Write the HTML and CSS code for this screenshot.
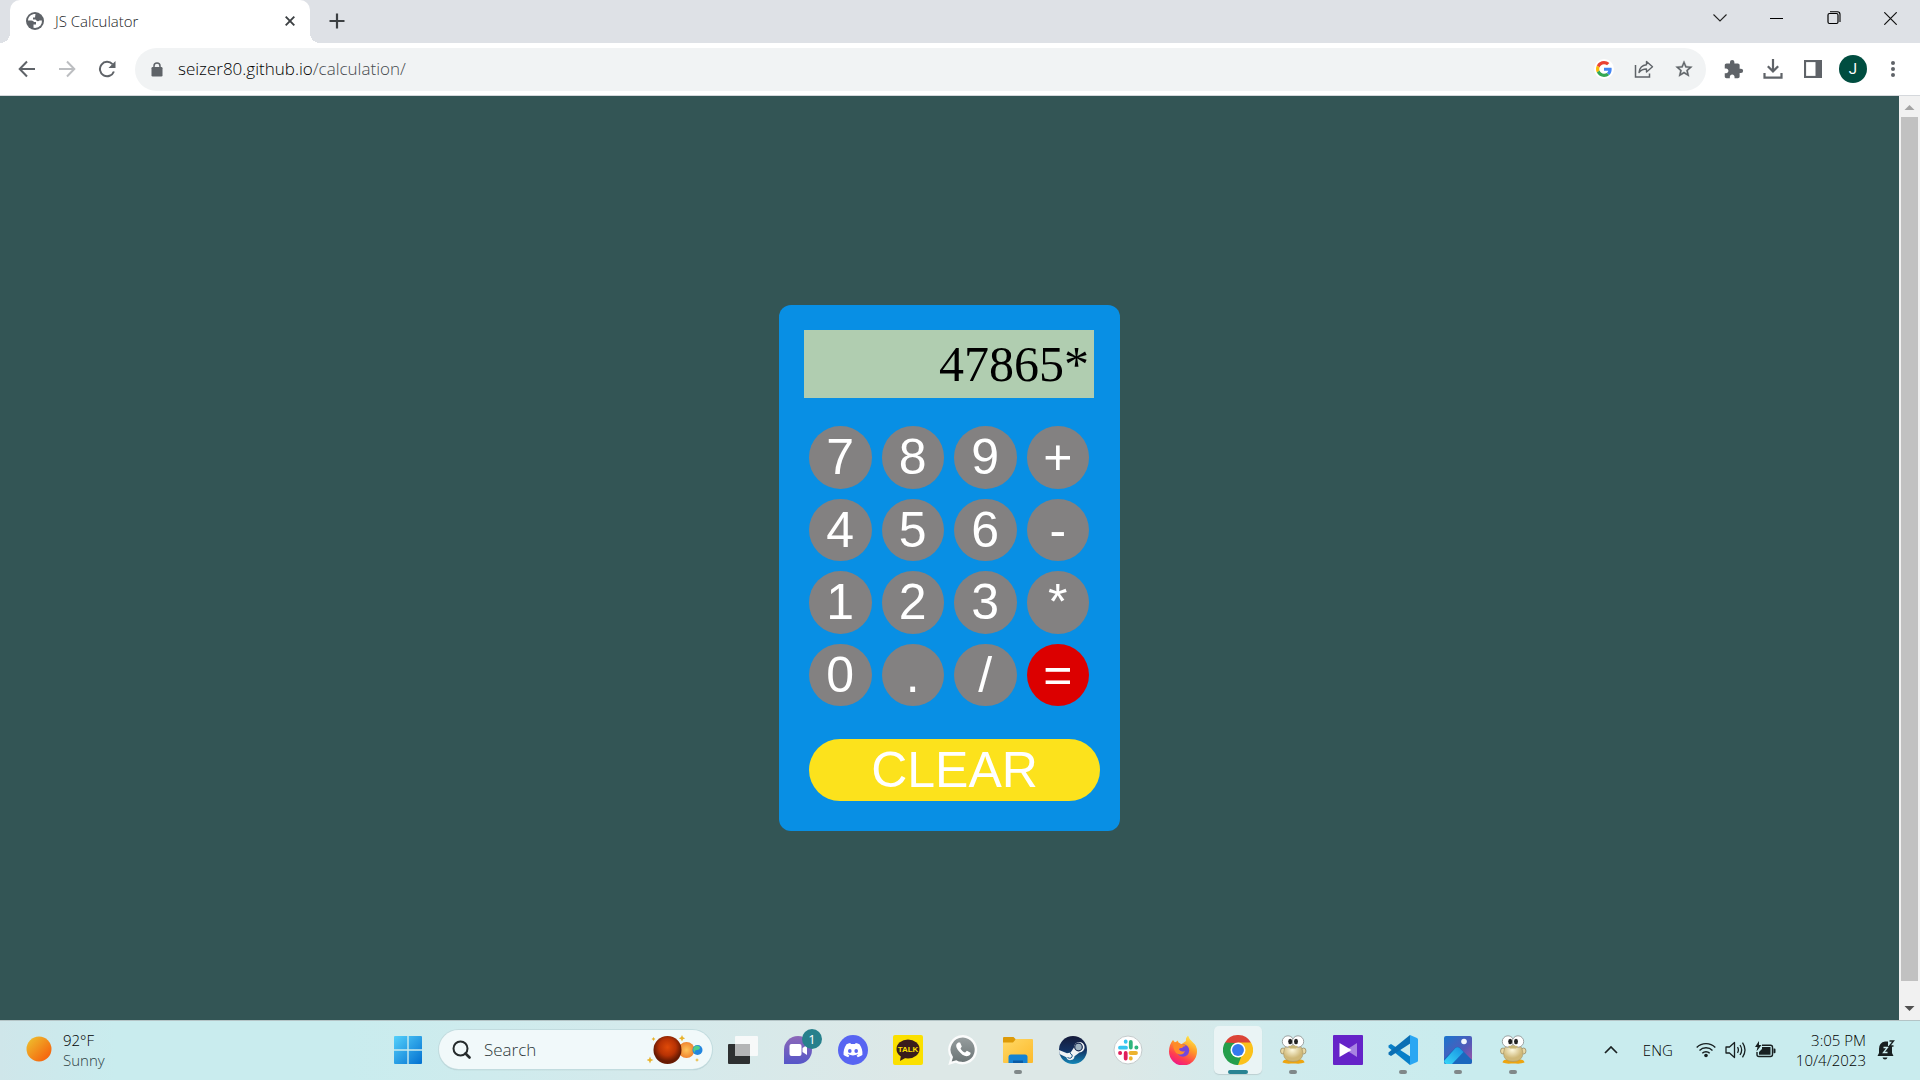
FILE: index.html
```html
<!DOCTYPE html>
<html lang="en">
<head>
<meta charset="utf-8">
<title>JS Calculator</title>
<link rel="stylesheet" href="styles.css">
</head>
<body>
<header class="tabstrip">
  <div class="tab">
    <svg class="favicon" viewBox="0 0 18 18"><circle cx="9" cy="9" r="9" fill="#5f6368"/><path d="M9.500 2C5 2 2.300 4.500 2 8.500h3.500q2 0 2.500 1.500h2v2.500H7.500v3.300Q12 16.500 14.500 13.500 16.300 11 15.900 8.500h-2.400q-1 1-2.500.5L9.500 7.500H7V5.500h2z" fill="#fff"/></svg>
    <span class="tab-title">JS Calculator</span>
    <button class="icon-btn tab-close" aria-label="Close tab"><svg width="10" height="10" viewBox="0 0 10 10"><path d="M.7.7l8.600 8.600M9.300.7L.7 9.300" stroke="#3c4043" stroke-width="1.900"/></svg></button>
  </div>
  <button class="icon-btn new-tab" aria-label="New tab"><svg width="16" height="16" viewBox="0 0 16 16"><path d="M8 .5v15M.5 8h15" stroke="#3c4043" stroke-width="2.200"/></svg></button>
  <div class="window-controls">
    <button class="win-btn" aria-label="Search tabs"><svg width="14" height="8" viewBox="0 0 14 8"><path d="M.5.5L7 7 13.500.5" fill="none" stroke="#222" stroke-width="1.100"/></svg></button>
    <button class="win-btn" aria-label="Minimize"><svg width="13" height="13" viewBox="0 0 13 13"><path d="M0 6.500h13" stroke="#000"/></svg></button>
    <button class="win-btn" aria-label="Restore"><svg width="14" height="14" viewBox="0 0 14 14"><rect x="1" y="2.500" width="10" height="10" rx="1.500" fill="none" stroke="#000" stroke-width="1.200"/><path d="M3 .7h7.300q2.700 0 2.700 2.700v7.600" fill="none" stroke="#000" stroke-width="1.100"/></svg></button>
    <button class="win-btn" aria-label="Close"><svg width="13" height="13" viewBox="0 0 13 13"><path d="M.3.3l12.400 12.400M12.700.3L.3 12.700" stroke="#111" stroke-width="1.200"/></svg></button>
  </div>
</header>

<nav class="toolbar" aria-label="Browser toolbar">
  <div class="nav-buttons">
    <button class="icon-btn nav-btn" aria-label="Back"><svg width="18" height="18" viewBox="0 0 18 18"><path d="M17 9H2M9 1.500L1.700 9 9 16.500" fill="none" stroke="#5f6368" stroke-width="2"/></svg></button>
    <button class="icon-btn nav-btn" aria-label="Forward" disabled><svg width="18" height="18" viewBox="0 0 18 18"><path d="M1 9h15M9 1.500L16.300 9 9 16.500" fill="none" stroke="#bcbec1" stroke-width="2"/></svg></button>
    <button class="icon-btn nav-btn" aria-label="Reload"><svg width="18" height="18" viewBox="0 0 18 18"><path d="M14.500 4.200A7.200 7.200 0 1 0 15.900 11.500" fill="none" stroke="#5f6368" stroke-width="2"/><path d="M17.500 1v7h-7z" fill="#5f6368"/></svg></button>
  </div>
  <div class="omnibox">
    <svg class="lock" width="12" height="15" viewBox="0 0 12 15"><path d="M3 6V4a3 3 0 0 1 6 0v2" fill="none" stroke="#5f6368" stroke-width="1.500"/><rect x=".5" y="5" width="11" height="9.500" rx="1.200" fill="#5f6368"/></svg>
    <div class="url" role="textbox" aria-label="Address">seizer80.github.io<span class="url-path">/calculation/</span></div>
    <button class="icon-btn omni-btn" aria-label="Search with Google"><span class="google"><svg width="16" height="16" viewBox="0 0 48 48"><path fill="#EA4335" d="M24 9.500c3.540 0 6.710 1.220 9.210 3.600l6.850-6.850C35.900 2.380 30.470 0 24 0 14.620 0 6.510 5.380 2.560 13.220l7.980 6.190C12.430 13.720 17.740 9.500 24 9.500z"/><path fill="#4285F4" d="M46.980 24.550c0-1.570-.15-3.090-.38-4.550H24v9.020h12.940c-.58 2.960-2.260 5.480-4.780 7.180l7.730 6c4.510-4.180 7.090-10.360 7.090-17.650z"/><path fill="#FBBC05" d="M10.530 28.590c-.48-1.450-.76-2.990-.76-4.590s.27-3.140.76-4.590l-7.980-6.190C.92 16.460 0 20.120 0 24s.92 7.540 2.560 10.780l7.970-6.190z"/><path fill="#34A853" d="M24 48c6.480 0 11.930-2.130 15.890-5.810l-7.730-6c-2.150 1.450-4.920 2.300-8.160 2.300-6.260 0-11.570-4.220-13.470-9.910l-7.980 6.190C6.510 42.620 14.620 48 24 48z"/></svg></span></button>
    <button class="icon-btn omni-btn" aria-label="Share"><svg width="20" height="18" viewBox="0 0 20 18"><path d="M1.500 5v12h14v-3.500" fill="none" stroke="#5f6368" stroke-width="1.500"/><path d="M12.500 1.500l6 5.300-6 5.200V9c-3.300 0-5.500 1-7.500 3.500.5-4 2.800-7.200 7.500-7.700z" fill="none" stroke="#5f6368" stroke-width="1.400" stroke-linejoin="round"/></svg></button>
    <button class="icon-btn omni-btn" aria-label="Bookmark"><svg width="20" height="20" viewBox="0 0 24 24"><path d="M22 9.240l-7.190-.62L12 2 9.190 8.630 2 9.240l5.460 4.730L5.820 21 12 17.270 18.180 21l-1.630-7.030L22 9.240zM12 15.400l-3.760 2.270 1-4.280-3.320-2.880 4.380-.38L12 6.100l1.710 4.040 4.380.38-3.320 2.880 1 4.280L12 15.400z" fill="#5f6368" stroke="#5f6368" stroke-width=".4"/></svg></button>
  </div>
  <div class="toolbar-actions">
    <button class="icon-btn nav-btn" aria-label="Extensions"><svg width="21" height="21" viewBox="0 0 24 24"><path d="M20.500 11H19V7c0-1.100-.9-2-2-2h-4V3.500a2.500 2.500 0 0 0-5 0V5H4c-1.100 0-1.990.9-1.990 2v3.800H3.500c1.490 0 2.700 1.210 2.700 2.700s-1.210 2.700-2.700 2.700H2V20c0 1.100.9 2 2 2h3.800v-1.500c0-1.490 1.210-2.700 2.700-2.700 1.490 0 2.700 1.210 2.700 2.700V22H17c1.100 0 2-.9 2-2v-4h1.500a2.500 2.500 0 0 0 0-5z" fill="#5f6368"/></svg></button>
    <button class="icon-btn nav-btn" aria-label="Downloads"><svg width="20" height="20" viewBox="0 0 20 20"><path d="M10 0v12M4.800 7.200L10 12.400l5.200-5.200" fill="none" stroke="#5f6368" stroke-width="2.200"/><path d="M1.500 14v4.700h17V14" fill="none" stroke="#5f6368" stroke-width="2.200"/></svg></button>
    <button class="icon-btn nav-btn" aria-label="Side panel"><svg width="18" height="18" viewBox="0 0 18 18"><rect x="1" y="1" width="16" height="16" fill="none" stroke="#5f6368" stroke-width="2.200"/><rect x="11.500" y="1" width="6" height="16" fill="#5f6368"/></svg></button>
    <button class="avatar" aria-label="Profile">J</button>
    <button class="icon-btn nav-btn" aria-label="Menu"><svg width="4" height="18" viewBox="0 0 4 18"><g fill="#5f6368"><circle cx="2" cy="3" r="2"/><circle cx="2" cy="9" r="2"/><circle cx="2" cy="15" r="2"/></g></svg></button>
  </div>
</nav>

<div class="viewport">
  <main class="page">
    <form class="calculator">
      <input class="display" type="text" aria-label="Result" value="47865*" readonly>
      <div class="keys">
        <button class="key" type="button">7</button>
        <button class="key" type="button">8</button>
        <button class="key" type="button">9</button>
        <button class="key" type="button">+</button>
        <button class="key" type="button">4</button>
        <button class="key" type="button">5</button>
        <button class="key" type="button">6</button>
        <button class="key" type="button">-</button>
        <button class="key" type="button">1</button>
        <button class="key" type="button">2</button>
        <button class="key" type="button">3</button>
        <button class="key" type="button">*</button>
        <button class="key" type="button">0</button>
        <button class="key" type="button">.</button>
        <button class="key" type="button">/</button>
        <button class="key key-equals" type="button">=</button>
      </div>
      <button class="clear" type="button">CLEAR</button>
    </form>
  </main>
  <div class="scrollbar" aria-hidden="true">
    <svg class="scroll-arrow" viewBox="0 0 21 21"><path d="M5.500 14L10.500 9l5 5z" fill="#a3a3a3"/></svg>
    <div class="scroll-track"><div class="scroll-thumb"></div></div>
    <svg class="scroll-arrow" viewBox="0 0 21 21"><path d="M5.500 7L10.500 12l5-5z" fill="#505050"/></svg>
  </div>
</div>

<svg class="defs" width="0" height="0" aria-hidden="true">
  <defs>
    <linearGradient id="sun" x1="0" y1="0" x2="1" y2="1"><stop offset=".1" stop-color="#eebb2c"/><stop offset=".8" stop-color="#f56a10"/></linearGradient>
    <linearGradient id="win" x1="0" y1="0" x2="1" y2="1"><stop offset="0" stop-color="#54d0fb"/><stop offset="1" stop-color="#0270d0"/></linearGradient>
    <linearGradient id="chatg" x1="0" y1="0" x2="0" y2="1"><stop offset="0" stop-color="#8c68b8"/><stop offset="1" stop-color="#5656c8"/></linearGradient>
    <linearGradient id="folderg" x1="0" y1="0" x2="1" y2="1"><stop offset="0" stop-color="#ffd866"/><stop offset="1" stop-color="#fdba2b"/></linearGradient>
    <linearGradient id="steamg" x1="0" y1="0" x2="0" y2="1"><stop offset="0" stop-color="#151a3a"/><stop offset=".5" stop-color="#133060"/><stop offset="1" stop-color="#1387b8"/></linearGradient>
    <linearGradient id="foxg" x1=".8" y1="0" x2=".3" y2="1"><stop offset="0" stop-color="#fff04a"/><stop offset=".4" stop-color="#ff9a28"/><stop offset=".75" stop-color="#ff3d50"/><stop offset="1" stop-color="#ee158a"/></linearGradient>
    <linearGradient id="photog" x1="0" y1="0" x2="1" y2="1"><stop offset="0" stop-color="#1976ce"/><stop offset=".6" stop-color="#5559b8"/><stop offset="1" stop-color="#a754a5"/></linearGradient>
    <linearGradient id="hillg" x1="0" y1="1" x2="1" y2="0"><stop offset="0" stop-color="#3ad8f8"/><stop offset="1" stop-color="#158ee0"/></linearGradient>
    <linearGradient id="whatsg" x1="0" y1="0" x2="0" y2="1"><stop offset="0" stop-color="#969d9e"/><stop offset="1" stop-color="#6c7576"/></linearGradient>
    <radialGradient id="mars" cx=".5" cy=".4"><stop offset="0" stop-color="#e04a08"/><stop offset=".6" stop-color="#b83204"/><stop offset="1" stop-color="#681a02"/></radialGradient>
    <radialGradient id="venus"><stop offset="0" stop-color="#ffc35a"/><stop offset="1" stop-color="#f08530"/></radialGradient>
    <radialGradient id="bodyg" cx=".45" cy=".3"><stop offset="0" stop-color="#fdf9df"/><stop offset="1" stop-color="#cfb878"/></radialGradient>
    <symbol id="goose" viewBox="0 0 30 30">
      <path d="M4.500 27.500Q5 24.500 9 24.500h13q4 0 4.500 3-3.500 1.500-9 1H13q-5 .5-8.500-1z" fill="#eda510"/>
      <ellipse cx="5" cy="16" rx="2.500" ry="3" fill="#e8d9a5" stroke="#8f8058" stroke-width=".7"/>
      <ellipse cx="25.500" cy="16" rx="2.500" ry="3" fill="#e8d9a5" stroke="#8f8058" stroke-width=".7"/>
      <path d="M9 10q-3 2-3.500 8 0 8.500 9.500 8.500T25 18q-.5-6-4-8z" fill="url(#bodyg)" stroke="#a89668" stroke-width=".6"/>
      <ellipse cx="10" cy="6.500" rx="5.700" ry="5.700" fill="#fff" stroke="#898d8c" stroke-width=".8"/>
      <ellipse cx="20" cy="6.500" rx="5.700" ry="5.700" fill="#fff" stroke="#898d8c" stroke-width=".8"/>
      <path d="M10 11q5-1 10 0l-2 2.500h-6z" fill="#c9b675"/>
      <ellipse cx="12.200" cy="6.500" rx="2" ry="2.700" fill="#222"/><ellipse cx="18" cy="6.500" rx="2" ry="2.700" fill="#222"/>
    </symbol>
  </defs>
</svg>

<footer class="taskbar">
  <button class="weather">
    <svg width="26" height="26" viewBox="0 0 26 26"><circle cx="13" cy="13" r="12.500" fill="url(#sun)"/></svg>
    <span class="weather-text"><span>92°F</span><span class="muted">Sunny</span></span>
  </button>

  <div class="apps">
    <button class="app" aria-label="Start"><svg viewBox="0 0 30 30"><path d="M2 1h12.300v13.300H1V2q0-1 1-1zM15.700 1H28q1 0 1 1v12.300H15.700zM1 15.700h13.300V29H2q-1 0-1-1zM15.700 15.700H29V28q0 1-1 1H15.700z" fill="url(#win)"/></svg></button>
    <label class="search">
      <svg width="19" height="19" viewBox="0 0 19 19"><circle cx="8.500" cy="8.500" r="7" fill="none" stroke="#252b2c" stroke-width="2"/><path d="M13.500 13.500l4 4" stroke="#252b2c" stroke-width="2.600" stroke-linecap="round"/></svg>
      <input class="search-input" type="text" placeholder="Search" aria-label="Search">
      <svg width="56" height="32" viewBox="0 0 56 32"><circle cx="39.500" cy="16" r="8" fill="url(#venus)"/><circle cx="20.500" cy="16" r="14" fill="url(#mars)"/><circle cx="50.500" cy="16" r="5" fill="#2286df"/><path d="M47 13q3-3 6 0 0 3-3 3t-2 3q-3-3-1-6z" fill="#4fce8b"/><g fill="#e8b22a"><path d="M3 22.500l1 2.500 2.500 1-2.500 1-1 2.500-1-2.500L-.5 26 2 25zM35 1l1 2.200 2.200 1L36 5.200l-1 2.200-1-2.200-2.200-1 2.200-1zM6.500 3l.7 1.300 1.300.7-1.300.7-.7 1.300-.7-1.300L4.500 5l1.300-.7zM50 24l.6 1.500 1.500.5-1.500.6-.6 1.500-.6-1.500-1.500-.6 1.500-.5z"/></g></svg>
    </label>
    <button class="app" aria-label="Task view"><svg viewBox="0 0 30 30"><rect x="0" y="9" width="22" height="20" rx="1" fill="#2e3031"/><rect x="7" y="1" width="23" height="20" rx="1" fill="#fafafa" fill-opacity=".92"/><rect x="7" y="9" width="15" height="12" fill="#b4b5b6"/></svg></button>
    <button class="app" aria-label="Chat">
      <svg viewBox="0 0 30 30"><path d="M1 29V15a14 14 0 1 1 14 14z" fill="url(#chatg)"/><rect x="6.500" y="9" width="12" height="12" rx="2" fill="#fff"/><path d="M19.500 13l4.500-3v10l-4.500-3z" fill="#fff"/></svg>
      <span class="badge">1</span>
    </button>
    <button class="app" aria-label="Discord"><svg viewBox="0 0 30 30"><circle cx="15" cy="15" r="15" fill="#5865f2"/><path d="M21.500 9.200A16 16 0 0 0 17.700 8l-.6 1.100a14 14 0 0 0-4.200 0L12.300 8a16 16 0 0 0-3.800 1.200C6 12.800 5.300 16.500 5.600 20a16 16 0 0 0 4.700 2.200l1.100-1.700-1.700-.9.500-.3a11 11 0 0 0 9.600 0l.5.3-1.700.9 1.100 1.700a16 16 0 0 0 4.700-2.200c.4-4.100-.7-7.700-2.900-10.800z" fill="#fff"/><ellipse cx="11.800" cy="16" rx="1.800" ry="2" fill="#5865f2"/><ellipse cx="18.200" cy="16" rx="1.800" ry="2" fill="#5865f2"/></svg></button>
    <button class="app" aria-label="KakaoTalk"><svg viewBox="0 0 30 30"><rect width="30" height="30" rx="2" fill="#fbe000"/><ellipse cx="15" cy="14" rx="11.500" ry="9.500" fill="#391c1c"/><path d="M8 20l-1 6 7-4z" fill="#391c1c"/><text class="talk" x="15" y="16.500" text-anchor="middle">TALK</text></svg></button>
    <button class="app" aria-label="WhatsApp"><svg viewBox="0 0 30 30"><path d="M15 0A14.700 14.700 0 0 0 2.500 22.500L.3 30l7.500-2.200A14.700 14.700 0 1 0 15 0z" fill="#fbfcfc"/><path d="M15 2.500A12.200 12.200 0 0 0 5 22L3.700 26.500l4.600-1.300A12.200 12.200 0 1 0 15 2.500z" fill="url(#whatsg)"/><path d="M10.300 7.500c-3 1.500-2.500 4.700 0 8 3 4 6.500 6.200 9.500 5.500 2-.5 3-2 2.800-3.300l-3.700-2-1.800 1.900c-2-.8-3.700-2.300-4.600-4.200l1.300-1.800-1.700-4z" fill="#fff"/></svg></button>
    <button class="app running" aria-label="File Explorer"><svg viewBox="0 0 30 30"><path d="M0 3q0-1 1-1h9.500l2.500 2.500V9H0z" fill="#dd9a08"/><path d="M0 7.500h10L13 4h16q1 0 1 1v22q0 1-1 1H1q-1 0-1-1z" fill="url(#folderg)"/><path d="M5.500 28v-6q0-2.500 2.500-2.500h14q2.500 0 2.500 2.500v6z" fill="#1583d4"/><path d="M10 28v-2.500h10V28z" fill="#0a5ba5"/></svg></button>
    <button class="app" aria-label="Steam"><svg viewBox="0 0 30 30"><circle cx="15" cy="15" r="14" fill="url(#steamg)"/><path d="M1 15l8 3.300q2-1 3.500-.5l3.500-5.300a5.300 5.300 0 1 1 5.500 5l-5 3.700a4.200 4.200 0 0 1-8.200 1L1.500 19z" fill="#f0f3f5"/><circle cx="20.500" cy="12" r="3.800" fill="#9fb2c2" stroke="#17284f" stroke-width="1.200"/><path d="M9.500 22.500l1.700.7a2.400 2.400 0 0 0 1.800-4.400l-1-.4" fill="none" stroke="#155182"/></svg></button>
    <button class="app" aria-label="Slack"><svg viewBox="0 0 30 30"><circle cx="15" cy="15" r="14" fill="#fff" stroke="#c4cbcc" stroke-width="1"/><g fill="none" stroke-width="3.800" stroke-linecap="round"><path d="M7 12.700h6M12.700 6.500v.3" stroke="#36c5f0"/><path d="M17.800 7v5.500M23.300 12.500h.2" stroke="#2eb67d"/><path d="M23 18h-5.500M17.800 23.200v.3" stroke="#ecb22e"/><path d="M12.700 23.500V18M7 18h.2" stroke="#e01e5a"/></g></svg></button>
    <button class="app" aria-label="Firefox"><svg viewBox="0 0 30 30"><path d="M5 5l2 2.500 3-2q0 3 3 4l5-3.500q-.5-3 2-5.500 1 4 5 7 4 3 4 9a14 14 0 0 1-28 0q0-7 4-11.500z" fill="url(#foxg)"/><circle cx="15" cy="15.500" r="6.200" fill="#7447dc"/><path d="M5 8q5-2 8 1 3 0 5 2-3 0-4 2-3-.5-3 1.500 2 3 6 1.500-2 5-7 3-5-2-5-11z" fill="#ff8b28"/></svg></button>
    <button class="app active" aria-label="Google Chrome" aria-current="true"><svg viewBox="0 0 48 48"><path d="M24 24L3.200 12A24 24 0 0 1 44.800 12z" fill="#db4437"/><path d="M24 24l20.800-12A24 24 0 0 1 24 48z" fill="#fbc11b"/><path d="M24 24v24A24 24 0 0 1 3.200 12z" fill="#249e4b"/><path d="M24 12h20.800L34.400 30z" fill="#fbc11b"/><path d="M13.600 30L3.200 12 24 13z" fill="#249e4b"/><path d="M34.400 30L24 48 24 30z" fill="#fbc11b"/><path d="M13.600 30L24 36l5-1-5 13-8-2z" fill="#249e4b"/><circle cx="24" cy="24" r="12" fill="#fff"/><circle cx="24" cy="24" r="9.500" fill="#3479ee"/></svg></button>
    <button class="app running" aria-label="Goose"><svg><use href="#goose"/></svg></button>
    <button class="app" aria-label="Video editor"><svg viewBox="0 0 30 30"><rect width="30" height="30" rx="1" fill="#6523c8"/><path d="M24 8v14L13 15z" fill="#a883e2"/><path d="M6.500 8v14L18.500 15z" fill="#fff"/></svg></button>
    <button class="app running" aria-label="Visual Studio Code"><svg viewBox="0 0 30 30"><path d="M3 9L.5 10.500v2L22 30l1-8z" fill="#087fc8"/><path d="M.5 19.500L3 21 23 8 22 0 .5 17.500z" fill="#0b6fb4"/><path d="M22 0l7 3q1 .5 1 1.500v21q0 1-1 1.500l-7 3q-1 0 0-2V2z" fill="#2aa7f3"/></svg></button>
    <button class="app running" aria-label="Photos"><svg viewBox="0 0 30 30"><rect x="1" y="1" width="28" height="28" rx="2" fill="url(#photog)"/><path d="M1 24l11.500-11.500q2-1.500 4 0L29 25v2q0 2-2 2H3q-2 0-2-2z" fill="#1a68be"/><path d="M3 29q-2-1-2-3l11.500-13q2-1.500 4 0l4 4L9 29z" fill="url(#hillg)"/><circle cx="21" cy="6.500" r="2.800" fill="#f2f7fc"/></svg></button>
    <button class="app running" aria-label="Goose"><svg><use href="#goose"/></svg></button>
  </div>

  <div class="tray">
    <button class="icon-btn tray-more" aria-label="Show hidden icons"><svg width="14" height="8" viewBox="0 0 14 8"><path d="M1 7l6-6 6 6" fill="none" stroke="#1a2021" stroke-width="1.700"/></svg></button>
    <button class="icon-btn lang">ENG</button>
    <button class="icon-btn status" aria-label="Network, sound and battery">
      <svg width="20" height="16" viewBox="0 0 20 16"><g fill="none" stroke="#182021" stroke-width="1.400"><path d="M.7 5.500a13.200 13.200 0 0 1 18.600 0M3.500 8.500a9.200 9.200 0 0 1 13 0M6.300 11.300a5.200 5.200 0 0 1 7.400 0"/></g><circle cx="10" cy="13.500" r="1.800" fill="#182021"/></svg>
      <svg width="21" height="18" viewBox="0 0 21 18"><g fill="none" stroke="#182021" stroke-width="1.300"><path d="M1 6h3.500l5-4.500v15L4.500 12H1z" stroke-linejoin="round"/><path d="M12.500 6.200q1.800 2.800 0 5.600M15 4q3.300 5 0 10M17.500 1.700q5 7.300 0 14.600"/></g></svg>
      <svg width="21" height="18" viewBox="0 0 21 18"><path d="M7 4.200h8.500q2 0 2 2v7.300q0 2-2 2H4q-2 0-2-2V11" fill="none" stroke="#182021" stroke-width="1.400"/><path d="M7 6h8.500v7.800H4V11l3-3zM18.500 7.500h1q1 0 1 1v2.700q0 1-1 1h-1zM4 0L0 6h2.500L1.500 10.500 6.500 4H4z" fill="#182021"/></svg>
    </button>
    <button class="icon-btn clock"><span>3:05 PM</span><span>10/4/2023</span></button>
    <button class="icon-btn bell" aria-label="Notifications"><svg width="18" height="20" viewBox="0 0 18 20"><path d="M2 9q0-6.500 6-7.500h3V6h4v7l1.500 3H.5L2 13z" fill="#182021"/><path d="M5.500 17.500h5q-.5 2-2.500 2t-2.500-2z" fill="#182021"/><path d="M6.500 7.500h4l-4 5h4" fill="none" stroke="#cdeef0" stroke-width="1.300"/><path d="M12.500 1h4l-4 5h4" fill="none" stroke="#182021" stroke-width="1.400"/></svg></button>
  </div>
</footer>
</body>
</html>
```
FILE: styles.css
```css
* { box-sizing: border-box; }

body {
  margin: 0;
  min-height: 100vh;
  display: flex;
  flex-direction: column;
  font-family: "Open Sans", "Noto Sans", sans-serif;
  font-weight: 300;
  color: #000;
}

button, input { font: inherit; color: inherit; }
button { border: 0; background: none; padding: 0; }
svg { display: block; flex: none; }
.defs { position: absolute; }

.icon-btn {
  display: flex;
  align-items: center;
  justify-content: center;
}

/* Tab strip */
.tabstrip {
  display: flex;
  height: 43px;
  padding-left: 10px;
  background: #dee1e6;
}
.tab {
  position: relative;
  display: flex;
  align-items: center;
  width: 300px;
  padding: 0 13px 2px 16px;
  background: #fff;
  border-radius: 10px 10px 0 0;
}
.tab::before, .tab::after {
  content: "";
  position: absolute;
  bottom: 0;
  width: 10px;
  height: 10px;
}
.tab::before { right: 100%; background: radial-gradient(circle at 0 0, #dee1e6 10px, #fff 10px); }
.tab::after { left: 100%; background: radial-gradient(circle at 100% 0, #dee1e6 10px, #fff 10px); }
.favicon { width: 18px; height: 18px; }
.tab-title {
  flex: 1;
  margin-left: 11px;
  font-size: 15px;
  line-height: 20px;
  color: #202124;
}
.tab-close { width: 14px; height: 20px; }
.new-tab { width: 32px; height: 42px; margin-left: 11px; }
.window-controls { display: flex; margin-left: auto; height: 36px; padding-right: 1px; }
.win-btn { display: flex; align-items: center; justify-content: center; width: 57px; }

/* Toolbar */
.toolbar {
  display: flex;
  align-items: center;
  height: 53px;
  padding: 0 7px;
  border-bottom: 1px solid #d5d8dc;
  background: #fff;
}
.nav-buttons { display: flex; width: 128px; }
.nav-btn { width: 40px; height: 36px; }
.omnibox {
  flex: 1;
  display: flex;
  align-items: center;
  height: 43px;
  padding: 0 2px 0 16px;
  border-radius: 22px;
  background: #f1f3f4;
}
.url {
  flex: 1;
  margin-left: 15px;
  font-size: 17px;
  line-height: 24px;
  color: #000;
}
.url-path { color: #45494d; }
.omni-btn { width: 40px; height: 36px; }
.google {
  display: grid;
  place-items: center;
  width: 20px;
  height: 20px;
  border-radius: 50%;
  background: #fff;
}
.toolbar-actions { display: flex; align-items: center; margin-left: 7px; }
.avatar {
  width: 28px;
  height: 28px;
  margin: 0 6px;
  border-radius: 50%;
  background: #004d40;
  color: #fff;
  font-family: Roboto, sans-serif;
  font-size: 15px;
  font-weight: 400;
}

/* Web page */
.viewport { flex: 1; display: flex; }
.page {
  flex: 1;
  display: flex;
  align-items: center;
  justify-content: center;
  padding-top: 20px;
  background: #335555;
}
.calculator {
  width: 341px;
  padding: 25px 25px 30px;
  border-radius: 12px;
  background: #088fe4;
}
.display {
  display: block;
  width: 290px;
  height: 68px;
  padding: 0 5px;
  border: 0;
  border-radius: 0;
  background: #b0cdb0;
  color: #000;
  font-family: "Liberation Serif", "Times New Roman", serif;
  font-size: 50px;
  font-weight: 400;
  text-align: right;
}
.keys {
  display: grid;
  grid-template-columns: repeat(4, 1fr);
  gap: 10px;
  margin: 28px 6px 33px 5px;
}
.key {
  aspect-ratio: 1;
  border-radius: 50%;
  background: #838181;
}
.key, .clear {
  color: #fff;
  font-family: "Liberation Sans", Arial, sans-serif;
  font-size: 50px;
  font-weight: 400;
  line-height: 60px;
}
.key-equals { background: #dc0000; }
.clear {
  display: block;
  width: 100%;
  height: 62px;
  margin-left: 5px;
  border-radius: 31px;
  background: #fce21c;
}

/* Page scrollbar */
.scrollbar {
  display: flex;
  flex-direction: column;
  width: 21px;
  background: #f1f1f1;
}
.scroll-arrow { width: 21px; height: 21px; }
.scroll-track { flex: 1; padding: 0 2px; }
.scroll-thumb { height: 98%; background: #c1c1c1; }

/* Taskbar */
.taskbar {
  display: grid;
  grid-template-columns: 1fr auto 1fr;
  align-items: center;
  height: 60px;
  padding: 0 25px 2px 26px;
  border-top: 1px solid #b4c4c6;
  background: linear-gradient(90deg, #cfe6ea 0, #c9ecee 6%, #c9ecee 18%, #d4eaec 33%, #dde8e7 48%, #dde8e7 58%, #d0ebed 66%, #c9ecee 76%, #c9ecee 100%);
}
.weather { display: flex; gap: 11px; text-align: left; justify-self: start; }
.weather svg { margin-top: 6px; }
.weather-text, .clock {
  display: flex;
  flex-direction: column;
  font-size: 15px;
  line-height: 20px;
}
.muted { color: #2f4244; }
.apps { display: flex; align-items: center; gap: 7px; }
.app {
  position: relative;
  display: grid;
  place-items: center;
  width: 48px;
  height: 48px;
  border-radius: 5px;
}
.app svg { width: 30px; height: 30px; }
.active { background: #eaf4f5; box-shadow: 0 1px 1px #bccfd1; }
.running::after, .active::after {
  content: "";
  position: absolute;
  bottom: 0;
  left: 50%;
  width: 8px;
  height: 4px;
  margin-left: -4px;
  border-radius: 2px;
  background: #808889;
}
.active::after { width: 20px; margin-left: -10px; background: #288393; }
.badge {
  position: absolute;
  top: 3px;
  right: 0;
  width: 20px;
  height: 20px;
  border-radius: 50%;
  background: #27808c;
  color: #fff;
  font-size: 13px;
  font-weight: 400;
  line-height: 20px;
}
.talk { font: bold 8px "Liberation Sans", sans-serif; fill: #fbe000; }
.search {
  display: flex;
  align-items: center;
  width: 273px;
  height: 39px;
  padding: 0 9px 0 13px;
  border-radius: 20px;
  background: #f1f9fa;
  box-shadow: 0 0 0 1px #c2dcdf, 0 1px 1px #94a9ab;
}
.search-input {
  flex: 1;
  min-width: 0;
  padding: 0;
  margin-left: 13px;
  border: 0;
  background: none;
  font-size: 17px;
  line-height: 24px;
}
.search-input::placeholder { color: #2b3738; opacity: 1; }
.tray { display: flex; align-items: center; justify-self: end; }
.tray-more { width: 32px; height: 40px; }
.lang { width: 62px; font-size: 15px; line-height: 20px; }
.status { gap: 9px; margin: 0 20px 0 7px; }
.clock { align-items: flex-end; }
.bell { margin-left: 11px; }
```
